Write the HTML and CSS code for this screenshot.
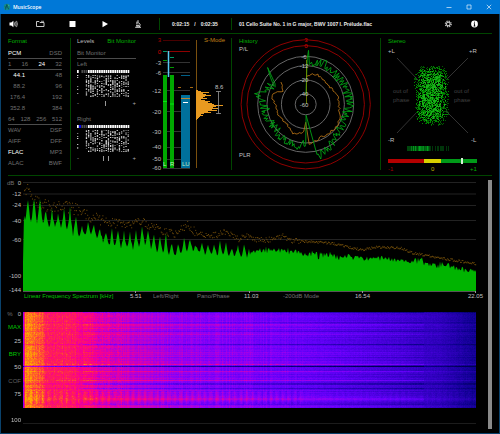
FILE: index.html
```html
<!DOCTYPE html>
<html lang="en">
<head>
<meta charset="utf-8">
<title>MusicScope</title>
<link rel="stylesheet" href="styles.css">
</head>
<body>
<div class="window">
  <header class="titlebar">
    <svg class="logo" viewBox="0 0 8 8" aria-hidden="true"><circle cx="4" cy="4" r="3.2" fill="#128c8c"/><path d="M2.4 6.6 4 1.4 4.3 3.6 5.8 6.4M1.8 3.6 3 4.4" fill="none" stroke="#06383c" stroke-width=".6"/><path d="M5 1.6 6 2.8" stroke="#6fd3a0" stroke-width=".7"/></svg>
    <h1>MusicScope</h1>
    <button class="caption" aria-label="Minimize"><svg viewBox="0 0 6 6"><path d="M.5 3.5h5"/></svg></button>
    <button class="caption" aria-label="Maximize"><svg viewBox="0 0 6 6"><path d="M1 1h4v4H1z"/></svg></button>
    <button class="caption" aria-label="Close"><svg viewBox="0 0 6 6"><path d="M.8.8l4.4 4.4M5.2.8L.8 5.2"/></svg></button>
  </header>

  <main class="content">
    <nav class="toolbar">
      <button class="tool" aria-label="Volume"><svg viewBox="0 0 10 10"><path d="M1.5 3.6h1.8L5.4 1.8v6.4L3.3 6.4H1.5z" fill="#fff"/><path d="M6.3 3.4q1 1.6 0 3.2M7.4 2.6q1.5 2.4 0 4.8M8.5 1.9q1.8 3.1 0 6.2" fill="none" stroke="#ddd" stroke-width=".7"/></svg></button>
      <button class="tool" aria-label="Open"><svg viewBox="0 0 10 10"><path d="M1.500 7.500V2.500h2.500l1 1h4v4z" fill="none" stroke="#ddd" stroke-width=".9"/><path d="M6 2.300h3" stroke="#ddd" stroke-width=".7"/></svg></button>
      <button class="tool" aria-label="Stop"><svg viewBox="0 0 10 10"><path d="M2.500 2h6v6h-6z" fill="#fff"/></svg></button>
      <button class="tool" aria-label="Play"><svg viewBox="0 0 10 10"><path d="M2.500 2v6.200L8 5.100z" fill="#fff"/></svg></button>
      <button class="tool" aria-label="Analyze"><svg viewBox="0 0 10 10"><path d="M5 1.200v3.200M3.900 2.600v2.600M2.200 8.300h5.800M3 6.300h3M5.800 3.800q2.400 1.600.6 4.200M3.300 7.200h2.600" fill="none" stroke="#eee" stroke-width=".9"/></svg></button>
      <p class="times"><time>0:02:15</time><span>/</span><time>0:02:35</time></p>
      <p class="track">01 Cello Suite No. 1 in G major, BWV 1007 I. Prélude.flac</p>
      <button class="tool" aria-label="Settings"><svg viewBox="0 0 10 10"><circle cx="5.300" cy="5" r="2.800" fill="none" stroke="#ccc" stroke-width="1.400" stroke-dasharray="1.200 1"/><circle cx="5.300" cy="5" r="1.800" fill="none" stroke="#ccc" stroke-width="1.100"/></svg></button>
      <button class="tool" aria-label="Info"><svg viewBox="0 0 10 10"><circle cx="5.500" cy="5" r="3.400" fill="#fff"/><path d="M5.500 2.700v1M5.500 4.500v2.600M4.800 4.700h.7M4.600 7h1.800" stroke="#000" stroke-width=".9"/></svg></button>
    </nav>

    <div class="panels">
      <section class="panel format">
        <h2 class="green">Format</h2>
        <p class="row ruled"><b>PCM</b><span>DSD</span></p>
        <p class="row ruled"><span>1</span><span>16</span><b>24</b><span>32</span></p>
        <p class="row rate"><b>44.1</b><span>48</span></p>
        <p class="row rate"><span>88.2</span><span>96</span></p>
        <p class="row rate"><span>176.4</span><span>192</span></p>
        <p class="row rate"><span>352.8</span><span>384</span></p>
        <p class="row ruled"><span>64</span><span>128</span><span>256</span><span>512</span></p>
        <p class="row"><span>WAV</span><span>DSF</span></p>
        <p class="row"><span>AIFF</span><span>DFF</span></p>
        <p class="row"><b>FLAC</b><span>MP3</span></p>
        <p class="row"><span>ALAC</span><span>BWF</span></p>
      </section>

      <section class="panel levels">
        <div class="bits">
          <div class="tabs"><button class="tab">Levels</button><button class="tab green">Bit Monitor</button></div>
          <p class="row ruled">Bit Monitor</p>
          <p class="row">Left</p>
          <canvas class="bitmap" id="bits-left" width="59" height="28"></canvas>
          <p class="row dc"><span>-</span><i></i><span>+</span></p>
          <p class="row second">Right</p>
          <canvas class="bitmap" id="bits-right" width="59" height="28"></canvas>
          <p class="row dc"><span>-</span><i class="pair"></i><span>+</span></p>
        </div>
        <svg class="chart" viewBox="136 38 95 132">
          <g class="end">
            <text class="darkred" x="161" y="42">3</text><text class="red" x="161" y="54">0</text>
            <text x="161" y="65">-3</text><text x="161" y="75">-6</text><text x="161" y="93">-12</text>
            <text x="161" y="114">-20</text><text x="161" y="134">-30</text><text x="161" y="149">-40</text>
            <text x="161" y="161">-50</text><text x="161" y="170">-60</text>
          </g>
          <path d="M163 40.500h27" stroke="#480000"/><path d="M163 51.500h27" stroke="#900000"/>
          <path d="M163 62.500h27M163 72.500h27M163 90.500h27M163 111.500h27M163 131.500h27M163 147.500h27M163 159.500h27M163 168.500h27" stroke="#333"/>
          <path d="M163 75h4v93h-4zM170 75h4v93h-4z" fill="#00a800"/>
          <path d="M163 101.500h4M170 104h4" stroke="#00e810"/>
          <path d="M163 51.500h4M170 57.500h4" stroke="#009868"/><path d="M163 60.500h4M170 67.500h4" stroke="#009800"/>
          <path d="M168.500 51v26" stroke="#58c8f0" stroke-width="1.500"/>
          <path d="M181 95h9v73h-9z" fill="#00709c"/><path d="M181 75.500h9" stroke="#006088"/>
          <path d="M181 98.500h9" stroke="#b88838"/><path d="M183 102.500h5" stroke="#fff"/>
          <path d="M178 87.500h3M190 87.500h3" stroke="#a86a10"/>
          <path d="M196.500 40v128" stroke="#7a500e"/>
          <path id="histogram" fill="#e89a20"/>
          <path d="M218.500 91.500v22M216 91.500h5M216 113.500h5" stroke="#999" stroke-width=".8"/>
          <text x="215" y="89">8.6</text><text class="amber" x="204" y="42">S-Mode</text>
          <g class="mark"><text x="163" y="166">L</text><text x="170" y="166">R</text><text x="182" y="166">LU</text></g>
        </svg>
      </section>

      <section class="panel">
        <svg class="chart" viewBox="232 38 148 132">
          <text class="green" x="239" y="43">History</text><text x="239" y="51">P/L</text><text x="239" y="157">PLR</text>
          <g fill="none" stroke="#666"><circle cx="305.700" cy="104.300" r="10.500"/><circle cx="305.700" cy="104.300" r="24.300"/><circle cx="305.700" cy="104.300" r="38.700"/><circle cx="305.700" cy="104.300" r="48"/></g>
          <g fill="none" stroke="#900000"><circle cx="305.700" cy="104.300" r="58.700"/><circle cx="305.700" cy="104.300" r="64.600"/></g>
          <path id="loudness" class="trace" stroke="#b06e14"/>
          <path id="peaks" class="trace" stroke="#00a014"/>
          <path d="M306.500 104V60" stroke="#7c9400" stroke-width=".8"/>
          <g class="mid"><text class="red" x="306" y="42">3</text><text class="red" x="306" y="48">0</text><text x="304" y="59">-6</text><text x="304" y="68">-12</text><text x="304" y="82">-20</text><text x="304" y="96">-40</text><text x="304" y="107">-60</text></g>
        </svg>
      </section>

      <section class="panel">
        <svg class="chart" viewBox="381 38 111 132">
          <text class="green" x="388" y="43">Stereo</text>
          <path d="M397 58l21 22M468 58l-22 22M397 133l21-22M468 133l-22-22" stroke="#404040" stroke-width=".8"/>
          <text x="388" y="53">+L</text><text x="469" y="53">+R</text><text x="388" y="142">-R</text><text x="471" y="142">-L</text>
          <g class="faint"><text x="393" y="93">out of</text><text x="393" y="102">phase</text><text x="454" y="93">out of</text><text x="454" y="102">phase</text></g>
          <path id="cloud-dim" stroke="#005a00"/><path id="cloud" stroke="#008a00"/><path id="cloud-lit" stroke="#18b018"/>
          <g id="balance" fill="#00b020"></g>
          <path d="M388 159h36v4h-36z" fill="#b40000"/><path d="M424 159h17v4h-17z" fill="#d8d000"/><path d="M441 159h36v4h-36z" fill="#009a18"/>
          <path d="M461 158h2v6h-2z" fill="#d8f0d8"/>
          <text class="darkred" x="388" y="171">-1</text><text class="yellow" x="431" y="171">0</text><text class="green" x="470" y="171">+1</text>
        </svg>
      </section>
    </div>

    <div class="lower">
      <div class="graphs">
        <svg class="chart" viewBox="8 180 476 112">
          <path d="M23 182.500h453M23 194h453M23 205.500h453M23 220.500h453M23 239.500h453" stroke="#222"/>
          <text class="dim" x="7" y="185">dB</text>
          <g class="end"><text x="21" y="185">0</text><text x="21" y="196">-12</text><text x="21" y="207">-24</text><text x="21" y="223">-40</text><text x="21" y="242">-60</text><text x="21" y="278">-100</text><text x="21" y="292">-144</text></g>
          <path id="hold" stroke="#8c600c" stroke-width=".8"/>
          <path id="spectrum" fill="#00b400"/>
          <path d="M23 291.500h453" stroke="#555"/><path d="M135.500 291v2M249.500 291v2M362.500 291v2M475.500 291v2" stroke="#999"/>
        </svg>
        <div class="modes">
          <button class="lit">Linear Frequency Spectrum [kHz]</button><span>5.51</span><button>Left/Right</button><button>Pano/Phase</button><span>11.03</span><button>-200dB Mode</button><span>16.54</span><span>22.05</span>
        </div>
        <div class="history">
          <div class="scale">
            <p><span class="dim">%</span>0</p><button class="lit">MAX</button><p>25</p><button class="lit">BRY</button><p>50</p><button>COF</button><p>75</p>
          </div>
          <canvas class="spectrogram" id="spectrogram" width="453" height="96"></canvas>
        </div>
        <p class="floor"><span>100</span></p>
      </div>
      <div class="scrollbar" role="scrollbar" aria-label="Graphs" aria-controls="spectrogram" aria-valuenow="0"></div>
    </div>
  </main>
</div>
<script src="main.js"></script>
</body>
</html>
```
FILE: styles.css
```css
* { box-sizing: border-box; margin: 0; padding: 0; }

body {
  background: #000;
  color: #c0c0c0;
  font: 6px/8px "Liberation Sans", Arial, sans-serif;
}

button {
  background: none;
  border: 0;
  color: inherit;
  font: inherit;
  text-align: left;
  white-space: nowrap;
}

.window {
  display: flex;
  flex-direction: column;
  min-height: 100vh;
  border: solid #0a426c;
  border-width: 0 1px 1px;
}

.titlebar {
  display: flex;
  align-items: center;
  height: 14px;
  margin: 0 -1px;
  padding: 0 6px 0 3px;
  background: #0078d7;
  color: #fff;
}
.titlebar h1 {
  flex: 1;
  font: 600 5px/8px "Open Sans", sans-serif;
}
.logo { width: 8px; height: 8px; margin-right: 2px; }
.caption { width: 10px; height: 10px; margin-left: 10px; }
.caption svg { display: block; width: 6px; height: 6px; margin: auto; fill: none; stroke: #e4f1fc; stroke-width: .7; }

.content { flex: 1; display: flex; flex-direction: column; padding: 0 7px 4px; }

.toolbar {
  display: grid;
  grid-template-columns: 27fr 32fr 33fr 33fr 26fr 72fr 212fr 26fr 23fr;
  align-items: center;
  height: 20px;
  border-bottom: 1px solid #004600;
  font: bold 5px/12px "Liberation Sans", Arial, sans-serif;
  color: #eee;
}
.tool { width: 10px; height: 10px; }
.tool svg { display: block; width: 10px; height: 10px; }
.times { display: flex; gap: 5px; height: 12px; padding-left: 12px; border-left: 1px solid #004600; }
.track { height: 12px; padding-left: 7px; border-left: 1px solid #004600; white-space: nowrap; }

.panels {
  display: grid;
  grid-template-columns: 63fr 161fr 149fr 111fr;
  padding: 4px 0 5px;
  border-bottom: 1px solid #004600;
}
.panel { min-width: 0; border-right: 1px solid #004600; }
.panel:last-child { border-right: 0; }
.panel h2, .tabs { font: 6px/7px "Liberation Sans", Arial, sans-serif; margin-bottom: 3px; }
.format { padding-right: 8px; }
.format, .bits { color: #707070; }

.row { display: flex; justify-content: space-between; height: 11px; line-height: 11px; }
.row b { color: #fff; font-weight: normal; }
.ruled { border-bottom: 1px solid #4c4c4c; }
.rate > :first-child { width: 17px; text-align: right; }

.levels { display: grid; grid-template-columns: 59fr 95fr; padding-left: 6px; }
.bits { min-width: 0; }
.tabs { display: flex; justify-content: space-between; }
.tab { color: #bbb; }
.bitmap { display: block; width: 100%; height: 28px; }
.dc { align-items: center; color: #aaa; }
.dc i { width: 1px; height: 5px; background: #999; }
.dc .pair { width: 6px; background: none; border: solid #999; border-width: 0 1px; }
.second { margin-top: 5px; }

.chart { display: block; overflow: visible; width: 100%; height: auto; font-size: 6px; fill: #c0c0c0; }
.end { text-anchor: end; }
.mid { text-anchor: middle; }
.mark { fill: #c0ecc0; }
.faint { fill: #404040; }
.trace { fill: none; stroke-width: .9; }
.tab.green, .green { color: #00b000; fill: #00b000; }
.red { fill: #d80000; }
.darkred { fill: #a80000; }
.amber { fill: #c08018; }
.yellow { fill: #c0b800; }
.dim { color: #707070; fill: #707070; }

.lower { flex: 1; display: flex; gap: 4px; padding-top: 4px; }
.graphs { flex: 1; min-width: 0; }
.scrollbar { width: 4px; background: #8a8a8a; }

.modes {
  display: grid;
  grid-template-columns: 106fr 23fr 44fr 47fr 39fr 72fr 113fr 16fr;
  height: 8px;
  padding-left: 16px;
  color: #707070;
}
.modes > * { min-width: 0; }
.modes span { color: #c0c0c0; }
.modes .lit, .scale .lit { color: #00c400; }

.history { display: grid; grid-template-columns: 15fr 453fr 8fr; margin-top: 12px; }
.scale {
  display: flex;
  flex-direction: column;
  justify-content: space-between;
  align-items: flex-end;
  min-width: 0;
  height: 87px;
  margin-top: -1px;
  padding-right: 2px;
  line-height: 7px;
}
.scale p { display: flex; gap: 5px; }
.scale button { color: #606060; }
.spectrogram { display: block; width: 100%; height: 96px; }
.floor {
  margin: 9px 8px 0 0;
  height: 7px;
  line-height: 7px;
  display: flex;
  gap: 2px;
}
.floor span { width: 13px; text-align: right; }
.floor::after { content: ""; flex: 1; height: 6px; border-bottom: 1px solid #1c1c1c; }
```
FILE: main.js
```js
let seed = 7;
const rnd = () => (seed = (seed * 16807) % 2147483647) / 2147483647;
const jitter = a => (rnd() * 2 - 1) * a;
const set = (id, d) => document.getElementById(id).setAttribute('d', d);

// Linear interpolation through [x, value] pairs.
function at(points, x) {
  for (let i = 1; i < points.length; i++) {
    if (x <= points[i][0]) {
      const [x0, y0] = points[i - 1], [x1, y1] = points[i];
      return y0 + (y1 - y0) * (x - x0) / (x1 - x0);
    }
  }
  return points[points.length - 1][1];
}

// Bit monitor: one column per bit, one line per recent sample.
function drawBits(id, blue) {
  const c = document.getElementById(id).getContext('2d');
  for (let b = 0; b < 24; b++) {
    const x = b * 2.2;
    const lit = b === 0 || b > 4 ? 1 : b === 1 ? 0 : .3;
    c.fillStyle = `rgba(255,255,255,${lit})`;
    c.fillRect(x, 0, 1.7, 3);
    for (let y = 5; y < 27; y++) {
      const on = b === 0 ? rnd() < .25 : b > 3 && rnd() < .66;
      if (on) {
        c.fillStyle = `rgba(255,255,255,${.3 + rnd() * .6})`;
        c.fillRect(x, y, 1.3, 1);
      }
    }
  }
  if (blue) { c.fillStyle = '#0000f0'; c.fillRect(2, 0, 2, 3); }
}
drawBits('bits-left', false);
drawBits('bits-right', true);

// S-Mode loudness distribution.
const bins = [2, 5, 13, 7, 10, 15, 9, 7, 11, 5, 9, 14, 12, 16, 18, 27, 20, 17, 22, 16, 21, 12, 15, 8, 5, 7, 4, 3, 2, 1];
set('histogram', bins.map((n, i) => `M196 ${90 + i}h${n}v1h-${n}z`).join(''));

const polar = (deg, r) => {
  const t = deg * Math.PI / 180;
  return `${(305.7 + r * Math.sin(t)).toFixed(1)} ${(104.3 - r * Math.cos(t)).toFixed(1)}`;
};
function ring(points, step, noise) {
  const out = [];
  for (let a = points[0][0]; a <= points[points.length - 1][0]; a += step) out.push(polar(a, at(points, a) + jitter(noise)));
  return out;
}
set('peaks', 'M' + [polar(1, 10), polar(2, 46), polar(3, 54), polar(5, 41),
  ...ring([[5, 42], [20, 44], [35, 43], [60, 43], [90, 43], [120, 42], [140, 44], [155, 49], [168, 53]], 1.4, 5),
  polar(178, 11), polar(180, 40),
  ...ring([[181, 38], [192, 43], [215, 41], [230, 38], [245, 40], [270, 41], [283, 49], [290, 40], [300, 39]], 1.4, 5),
  polar(307, 44), polar(314, 53), polar(304, 37), polar(299, 35)].join('L'));
set('loudness', 'M' + [polar(2, 27), ...ring([[4, 29], [20, 32], [50, 29], [80, 33], [100, 34], [122, 38], [140, 37], [155, 36], [175, 40]], 3, 1),
  polar(180, 18), polar(184, 27), ...ring([[186, 28], [200, 32], [225, 27], [245, 29], [265, 29], [285, 35], [300, 27], [313, 33]], 3, 1.2)].join('L'));

// Stereo scatter.
const dots = { 'cloud-dim': '', cloud: '', 'cloud-lit': '' };
const names = Object.keys(dots);
for (let i = 0; i < 2100; i++) {
  const x = 431.5 + jitter(12) + jitter(6);
  const y = 95 + jitter(25) + jitter(6);
  const d = Math.pow(Math.abs(x - 431.5) / 18, 3) + Math.pow(Math.abs(y - 95) / 31, 3);
  if (d > 1.05) continue;
  dots[names[Math.floor(rnd() * 3 * (1.05 - d * .6)) % 3]] += `M${Math.round(x)} ${Math.round(y) + .5}h1`;
}
names.forEach(n => set(n, dots[n]));
const balance = document.getElementById('balance');
for (let x = 407; x < 455; x++) {
  const o = x < 411 ? .4 : x < 430 ? .35 + rnd() * .65 : rnd() < .35 ? .3 : 0;
  balance.innerHTML += `<path opacity="${o.toFixed(2)}" d="M${x} 146h1v5h-1z"/>`;
}

// Frequency spectrum.
const crest = [[28, 201], [34, 200], [40, 201], [46, 213], [52, 209], [58, 217], [64, 212], [70, 209], [76, 218], [82, 227], [88, 223], [94, 225], [100, 231], [106, 234], [112, 232], [118, 232], [124, 234], [130, 235], [136, 233], [142, 227], [148, 232], [154, 235], [160, 237], [166, 236], [172, 246], [178, 245], [184, 239], [190, 241], [196, 247], [202, 244], [214, 247], [220, 243], [232, 249], [244, 246], [256, 251], [268, 247], [290, 250], [330, 253], [355, 256], [385, 258], [405, 261], [420, 258], [430, 264], [445, 263], [455, 268], [476, 271]];
const valley = [[23, 262], [24, 220], [30, 224], [45, 225], [50, 232], [60, 228], [78, 240], [88, 236], [100, 242], [112, 249], [135, 251], [147, 246], [158, 255], [176, 258], [190, 251], [212, 257], [235, 259], [255, 257], [270, 254], [290, 256], [340, 262], [385, 262], [420, 266], [445, 270], [460, 273], [476, 275]];
let line = 'M23 291V262';
for (let x = 24; x < 476; x++) {
  const phase = (x - 28 + 600) % 6;
  const near = Math.min(phase, 6 - phase);
  const harmonic = x < 250 ? Math.pow(Math.max(0, 1 - near / 3), 1.3) : rnd() * .8;
  const low = at(valley, x), high = at(crest, x);
  line += `L${x} ${(low + (high - low) * harmonic - rnd() * 4).toFixed(1)}`;
}
set('spectrum', line + 'L476 272V291z');

const holdCurve = [[23, 193], [28, 190], [33, 200], [43, 205], [67, 207], [77, 210], [83, 214], [100, 219], [117, 224], [133, 224], [142, 220], [150, 227], [167, 232], [177, 234], [187, 224], [197, 235], [217, 235], [227, 231], [237, 239], [250, 236], [256, 240], [275, 239], [284, 234], [288, 241], [315, 242], [335, 244], [360, 250], [378, 247], [400, 248], [412, 253], [440, 258], [476, 264]];
let hold = '';
for (let x = 24; x < 476; x += .8) {
  const spread = x < 100 ? 6 : x < 200 ? 4.5 : x < 300 ? 3 : 1.2;
  hold += `M${x.toFixed(1)} ${(at(holdCurve, x) + jitter(spread)).toFixed(1)}h1`;
}
set('hold', hold);

// Spectrogram.
const stops = [[0, [0, 0, 80]], [.12, [12, 0, 140]], [.28, [55, 0, 200]], [.42, [100, 0, 250]], [.52, [145, 0, 245]], [.62, [200, 0, 195]], [.72, [250, 0, 140]], [.82, [255, 35, 80]], [.92, [255, 105, 35]], [1, [255, 170, 0]]];
const channels = [0, 1, 2].map(k => stops.map(([v, c]) => [v, c[k]]));
const level = [[0, .55], [2, .97], [6, .93], [19, .89], [22, .81], [45, .78], [62, .74], [77, .67], [100, .62], [130, .57], [150, .53], [225, .48], [260, .44], [320, .38], [380, .31], [420, .24], [453, .13]];
const rows = { 10: -.08, 12: .05, 13: .06, 16: .08, 19: -.08, 22: .04, 32: -.14, 40: .06, 42: .06, 44: .04, 45: -.04, 49: .05, 50: .05, 52: .13, 53: -.1, 54: -.34, 55: -.06, 59: .11, 66: .05, 68: .09, 71: -.12, 72: -.14, 76: -.12, 77: -.06, 84: .04, 85: .07, 86: .1, 87: .1, 88: .07, 92: -.1, 94: .08, 0: -.16 };
const ctx = document.getElementById('spectrogram').getContext('2d');
const image = ctx.createImageData(453, 96);
const column = Array.from({ length: 453 }, () => jitter(.03));
for (let y = 0; y < 96; y++) {
  const shift = (rows[y] || 0) + jitter(.035);
  for (let x = 0; x < 453; x++) {
    const pulse = (y > 78 && y < 92) || y === 52 ? Math.sin(x * Math.PI / 3) * .035 : 0;
    const fade = (x < 60 && y !== 54 ? .4 : 1) * (x > 400 ? .5 : 1);
    let v = at(level, x) + shift * fade + (column[x] + pulse) * (x < 280 ? 1 : .3) + jitter(x < 100 ? .045 : .02);
    v = Math.max(0, Math.min(1, v));
    const i = (y * 453 + x) * 4;
    for (let k = 0; k < 3; k++) image.data[i + k] = at(channels[k], v);
    image.data[i + 3] = 255;
  }
}
ctx.putImageData(image, 0, 0);
```
